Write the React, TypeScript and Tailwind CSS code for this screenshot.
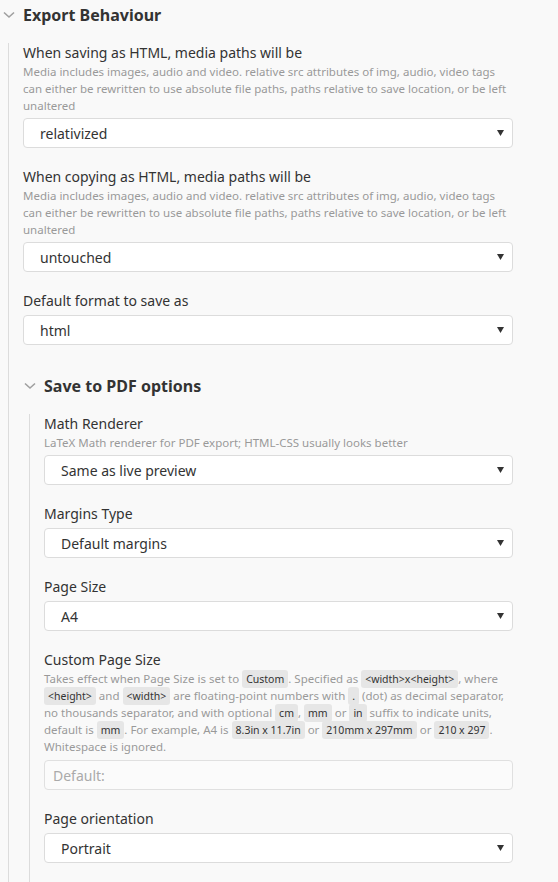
import React from "react";

const Code = ({ children }: { children: React.ReactNode }) => (
  <code className="rounded-[3px] bg-[#e6e6e6] px-[4px] py-[2px] font-['Noto_Sans',sans-serif] text-[10.5px] leading-none text-[#333]">
    {children}
  </code>
);

const Chevron = () => (
  <svg width="12" height="8" viewBox="0 0 12 8" className="mr-[8px] shrink-0">
    <path d="M1 1.5 L6 6 L11 1.5" fill="none" stroke="#a0a0a0" strokeWidth="1.6" />
  </svg>
);

const Select = ({ value }: { value: string }) => (
  <div className="mt-[4px] flex h-[30px] items-center justify-between rounded-[4px] border border-[#dcdcdc] bg-white pl-[16px] pr-[8px] text-[14px] text-[#333]">
    <span>{value}</span>
    <svg width="7" height="6" viewBox="0 0 7 6">
      <path d="M0 0 H7 L3.5 6 Z" fill="#333" />
    </svg>
  </div>
);

const Setting = ({
  label,
  desc,
  children,
}: {
  label: string;
  desc?: React.ReactNode;
  children: React.ReactNode;
}) => (
  <div className="mb-[19px]">
    <div className="text-[14px] leading-[20px] text-[#333]">{label}</div>
    {desc && <div className="text-[11.5px] leading-[17px] text-[#999]">{desc}</div>}
    {children}
  </div>
);

const Section = ({ title, children }: { title: string; children: React.ReactNode }) => (
  <div>
    <div className="flex h-[24px] items-center pl-[1px]">
      <Chevron />
      <span className="text-[16px] font-bold text-[#333]">{title}</span>
    </div>
    <div className="ml-[6px] mt-[16px] border-l border-[#dcdcdc] pl-[14px]">{children}</div>
  </div>
);

const mediaDesc =
  "Media includes images, audio and video. relative src attributes of img, audio, video tags can either be rewritten to use absolute file paths, paths relative to save location, or be left unaltered";

export default function App() {
  return (
    <div className="h-[882px] overflow-hidden bg-[#f9f9f9] pl-[2px] pr-[45px] pt-[3px] font-['Noto_Sans',sans-serif]">
      <Section title="Export Behaviour">
        <Setting label="When saving as HTML, media paths will be" desc={mediaDesc}>
          <Select value="relativized" />
        </Setting>
        <Setting label="When copying as HTML, media paths will be" desc={mediaDesc}>
          <Select value="untouched" />
        </Setting>
        <Setting label="Default format to save as">
          <Select value="html" />
        </Setting>
        <div className="pt-[10px]">
          <Section title="Save to PDF options">
            <Setting
              label="Math Renderer"
              desc="LaTeX Math renderer for PDF export; HTML-CSS usually looks better"
            >
              <Select value="Same as live preview" />
            </Setting>
            <Setting label="Margins Type">
              <Select value="Default margins" />
            </Setting>
            <Setting label="Page Size">
              <Select value="A4" />
            </Setting>
            <Setting
              label="Custom Page Size"
              desc={
                <>
                  Takes effect when Page Size is set to <Code>Custom</Code>. Specified as{" "}
                  <Code>{"<width>x<height>"}</Code>, where <Code>{"<height>"}</Code> and{" "}
                  <Code>{"<width>"}</Code> are floating-point numbers with <Code>.</Code> (dot) as
                  decimal separator, no thousands separator, and with optional <Code>cm</Code>,{" "}
                  <Code>mm</Code> or <Code>in</Code> suffix to indicate units, default is{" "}
                  <Code>mm</Code>. For example, A4 is <Code>8.3in x 11.7in</Code> or{" "}
                  <Code>210mm x 297mm</Code> or <Code>210 x 297</Code>. Whitespace is ignored.
                </>
              }
            >
              <input
                placeholder="Default:"
                className="mt-[5px] block h-[30px] w-full rounded-[4px] border border-[#e0e0e0] bg-[#fbfbfb] px-[8px] text-[14px] text-[#333] placeholder:text-[#aaa] outline-none"
              />
            </Setting>
            <Setting label="Page orientation">
              <Select value="Portrait" />
            </Setting>
            <div className="flex items-center gap-[8px]">
              <span className="inline-block h-[14px] w-[14px] rounded-[3px] border border-[#ccc] bg-white" />
              <span className="text-[14px] text-[#333]">Print background</span>
            </div>
          </Section>
        </div>
      </Section>
    </div>
  );
}
